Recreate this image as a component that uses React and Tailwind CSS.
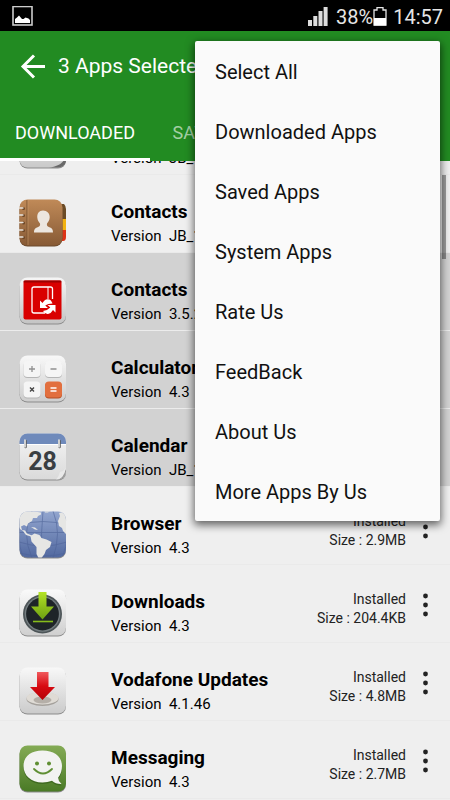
import clsx from 'clsx';

const TABS = ['DOWNLOADED', 'SAVED APPS', 'SYSTEM'];

const MENU_ITEMS = [
  'Select All',
  'Downloaded Apps',
  'Saved Apps',
  'System Apps',
  'Rate Us',
  'FeedBack',
  'About Us',
  'More Apps By Us',
];

const Tile = ({ id, from, to, children }) => (
  <svg width="48" height="48" viewBox="0 0 48 48" className="shrink-0" aria-hidden="true">
    <defs>
      <linearGradient id={id} x1="0" y1="0" x2="0" y2="1">
        <stop offset="0" stopColor={from} />
        <stop offset="1" stopColor={to} />
      </linearGradient>
      <clipPath id={`${id}-clip`}>
        <rect x="0.5" y="0.5" width="46.5" height="46" rx="8" />
      </clipPath>
    </defs>
    <rect x="0.5" y="1.5" width="46.5" height="46" rx="8" fill="#8b8b8b" />
    <rect x="0.5" y="0.5" width="46.5" height="46" rx="8" fill={`url(#${id})`} />
    {children}
  </svg>
);

const ClockIcon = () => (
  <Tile id="clock" from="#f7f7f7" to="#c9c9c9">
    <path d="M30 46.500c10-1 15-5 17-12v5c0 4-4 7-8 7z" fill="#3f3f3f" opacity="0.7" />
  </Tile>
);

const ContactsIcon = () => (
  <svg width="48" height="48" viewBox="0 0 48 48" className="shrink-0" aria-hidden="true">
    <defs>
      <linearGradient id="book" x1="0" y1="0" x2="0" y2="1">
        <stop offset="0" stopColor="#c08a58" />
        <stop offset="1" stopColor="#875a35" />
      </linearGradient>
    </defs>
    <path d="M40 5h5q2 2 2 5v10h-7z" fill="#6b4b26" />
    <path d="M40 20h7v11h-7z" fill="#f2b210" />
    <path d="M40 31h7v7q0 4-3 4h-4z" fill="#dd3316" />
    <rect x="0.5" y="1.5" width="43" height="46" rx="8" fill="#6d4a2c" />
    <rect x="0.5" y="0.5" width="43" height="46" rx="8" fill="url(#book)" />
    <path d="M8 1v45" stroke="#7c5431" strokeWidth="1" />
    <path d="M9 1v45" stroke="#cb9a6b" strokeWidth="0.6" />
    {[9, 16, 23.5, 31, 38].map(y => (
      <g key={y}>
        <circle cx="4.5" cy={y + 0.6} r="1.5" fill="#6a4526" />
        <path d={`M0.500 ${y}h3.500`} stroke="#e9e4dd" strokeWidth="1.300" strokeLinecap="round" />
      </g>
    ))}
    <path d="M24 11.500c-4 0-6 3-5.700 7 .2 3 1.500 4.500 2.700 6 .4 2-.3 3-2 3.600-2.600 1-4 2-4 5.400h19c0-3.400-1.400-4.400-4-5.400-1.700-.6-2.400-1.600-2-3.600 1.200-1.500 2.500-3 2.700-6 .3-4-2.700-7-6.700-7z" fill="#ece6df" />
  </svg>
);

const RedContactsIcon = () => (
  <Tile id="sync" from="#f6f6f6" to="#c4c4c4">
    <rect x="4.500" y="3.500" width="38" height="39" rx="2" fill="#d90000" />
    <rect x="4.500" y="3.500" width="38" height="2" rx="1" fill="#9c0000" />
    <g fill="none" stroke="#fff" strokeWidth="1.300">
      <path d="M33.500 22V12q0-2-2-2H15q-2 0-2 2v22q0 2 2 2h11" />
      <path d="M29 10v12" strokeWidth="1" />
    </g>
    <path d="M21 23.500v7.500h8l-2.800-2.500q2.800-2 7.300-2-1.500-4.500-5-4.300-3 .2-5 3.800z" fill="#fff" />
    <path d="M36.500 35.500v-7.500h-8l2.800 2.500q-2.800 3-7.300 3.500 2 3.300 5 3 3-.4 5-4z" fill="#fff" />
  </Tile>
);

const CalculatorIcon = () => (
  <Tile id="calc" from="#f8f8f8" to="#cdcdcd">
    {[[4.5, 6], [26, 6], [4.5, 26.5], [26, 26.5]].map(([x, y], i) => (
      <g key={i}>
        <rect x={x} y={y + 1} width="17" height="16" rx="4" fill={i === 3 ? '#b34e24' : '#b5b5b5'} />
        <rect x={x} y={y} width="17" height="16" rx="4" fill={i === 3 ? '#e26f3e' : '#f5f5f5'} />
      </g>
    ))}
    <g fill="none" strokeWidth="1.300">
      <path d="M10 14h6M13 11v6M31.500 14h6" stroke="#909090" />
      <path d="M11 32.500l4 4M15 32.500l-4 4" stroke="#444" strokeWidth="1.400" />
      <path d="M31.500 33h6M31.500 36h6" stroke="#fff" />
    </g>
  </Tile>
);

const CalendarIcon = () => (
  <Tile id="cal" from="#f4f4f4" to="#dadada">
    <g clipPath="url(#cal-clip)">
      <rect width="48" height="11" fill="#6f8abb" />
      <path d="M0 11.500h48" stroke="#fff" strokeWidth="1" />
      <path d="M47 36l-9 11h10z" fill="#999" />
      <path d="M47 35q-2 3-6 4-1 4-4 8 8-1 10-12z" fill="#e9e9e9" />
    </g>
    <path d="M6.500 8v6M40.500 8v6" stroke="#555" strokeWidth="2.500" strokeLinecap="round" />
    <path d="M6 7v7M40 7v7" stroke="#eee" strokeWidth="1.600" strokeLinecap="round" />
    <text x="23.500" y="37" textAnchor="middle" fontFamily="Roboto, sans-serif" fontWeight="700" fontSize="25" fill="#3a3e42">28</text>
  </Tile>
);

const BrowserIcon = () => (
  <Tile id="globe" from="#93a6cf" to="#5269a0">
    <g clipPath="url(#globe-clip)">
      <g fill="none" stroke="#4d6297" strokeWidth="0.8" opacity="0.7">
        <path d="M0 14q24-7 48 0M0 31q24 8 48 0M0 21.500h48M0 42q24 6 48 0" />
        <path d="M24 0q-3 23 0 47M13 0Q2 22 13 47M34 0q9 22 0 47M4 0q-8 24 0 47M43 0q10 24 0 47" />
      </g>
      <g fill="#e6e6e4">
        <path d="M0 0h12l10 1.500 0 2-3 1.500-1 2-4 0-1 3-4 2.500-1 3-3-1.500-3 1.500 1 3.500 3 .5 2 3 5 2-1 1-5-1.500-3-4-3-2-3-6z" />
        <path d="M12 16l4 .5 3 2.500-3-.500z" />
        <path d="M26 0h5l-2 1.500h-3z" />
        <path d="M11.500 25l4-2.500 5 1.500 2 3 5 1.500 5 2.500-1.500 5-4 3-1.500 4-3 4-3 0-2-4 0-7-5-5.500z" />
        <path d="M47 0v23l-3-3-1-3-3-2-1-5 2-5-1-3z" />
      </g>
    </g>
  </Tile>
);

const DownloadsIcon = () => (
  <Tile id="down" from="#fafafa" to="#cfcfcf">
    <circle cx="23.500" cy="25" r="19.500" fill="#4d5558" />
    <circle cx="23.500" cy="25" r="17.800" fill="#747d80" />
    <circle cx="23.500" cy="25" r="16.400" fill="#1e2428" />
    <defs>
      <linearGradient id="lime" x1="0" y1="0" x2="0" y2="1">
        <stop offset="0" stopColor="#b4e325" />
        <stop offset="1" stopColor="#6da012" />
      </linearGradient>
    </defs>
    <path d="M19.500 3h8v14.500h7.500L23.500 30.500 12 17.500h7.500z" fill="url(#lime)" />
    <path d="M14 32.500h20" stroke="#86bc1b" strokeWidth="1.600" />
  </Tile>
);

const VodafoneIcon = () => (
  <Tile id="voda" from="#f8f8f8" to="#cbcbcb">
    <ellipse cx="23.500" cy="32" rx="16" ry="7" fill="#a5a19c" />
    <ellipse cx="23.500" cy="31" rx="16" ry="6.500" fill="#dfdbd5" />
    <ellipse cx="23.500" cy="33" rx="9" ry="3.500" fill="#b5afa8" />
    <defs>
      <linearGradient id="red" x1="0" y1="0" x2="0" y2="1">
        <stop offset="0" stopColor="#f0595c" />
        <stop offset="0.500" stopColor="#d80b12" />
        <stop offset="1" stopColor="#b50006" />
      </linearGradient>
    </defs>
    <path d="M18 5h11.500v15H36L23.500 33 11 20h7z" fill="url(#red)" />
  </Tile>
);

const MessagingIcon = () => (
  <Tile id="msg" from="#84ab55" to="#4a7a26">
    <path d="M23.500 7C12 7 4.500 13 4.500 22.500S12 39 23.500 39q5 0 9.500-1.800 4 3.600 9.500 3.300-3.500-3-3.300-6.500 3.800-4.500 3.800-11.500C43 13 35 7 23.500 7z" fill="#3f6a20" />
    <path d="M23.500 5.500C12 5.500 4.500 11.500 4.500 21S12 37.500 23.500 37.500q5 0 9.500-1.800 4 3.600 9.500 3.300-3.500-3-3.300-6.500 3.800-4.500 3.800-11.500C43 11.500 35 5.500 23.500 5.500z" fill="#f2f3f1" />
    <circle cx="18" cy="18.500" r="2" fill="#5f8f33" />
    <circle cx="30" cy="18.500" r="2" fill="#5f8f33" />
    <path d="M15 24q9 9 18 0" fill="none" stroke="#5f8f33" strokeWidth="1.800" strokeLinecap="round" />
  </Tile>
);

const APPS = [
  { name: 'Contacts', version: 'JB_1.0', size: '1.9MB', icon: ContactsIcon },
  { name: 'Contacts', version: '3.5.2', size: '3.1MB', icon: RedContactsIcon, selected: true },
  { name: 'Calculator', version: '4.3', size: '1.2MB', icon: CalculatorIcon, selected: true },
  { name: 'Calendar', version: 'JB_1.0', size: '2.4MB', icon: CalendarIcon, selected: true },
  { name: 'Browser', version: '4.3', size: '2.9MB', icon: BrowserIcon },
  { name: 'Downloads', version: '4.3', size: '204.4KB', icon: DownloadsIcon },
  { name: 'Vodafone Updates', version: '4.1.46', size: '4.8MB', icon: VodafoneIcon },
  { name: 'Messaging', version: '4.3', size: '2.7MB', icon: MessagingIcon },
];

const AppRow = ({ app }) => {
  const Icon = app.icon;
  return (
    <li className={clsx('flex h-[78px] shrink-0 items-start border-b pt-6 pl-[19px] pr-3', app.selected ? 'border-[#ececec] bg-[#d2d2d2]' : 'border-[#eaeaea]')}>
      <Icon />
      <div className="ml-11 min-w-0 flex-1">
        <p className="truncate text-[19px] leading-[26px] font-bold">{app.name}</p>
        <p className="text-[15px] leading-[22px] whitespace-pre">Version  {app.version}</p>
      </div>
      <div className="pt-px text-right text-sm leading-[19px] text-[#222]">
        <p>Installed</p>
        <p>Size : {app.size}</p>
      </div>
      <button type="button" aria-label={`Options for ${app.name}`} className="ml-2 flex h-8 w-6 justify-center">
        <svg width="6" height="32" viewBox="0 0 6 32" fill="#222">
          <circle cx="2.500" cy="7" r="2.400" />
          <circle cx="2.500" cy="16" r="2.400" />
          <circle cx="2.500" cy="25" r="2.400" />
        </svg>
      </button>
    </li>
  );
};

const StatusBar = () => (
  <div className="flex h-[31px] shrink-0 items-center bg-black pt-0.5 pr-[7px] pl-3 text-xl text-[#e6e6e6]">
    <svg width="21" height="21" viewBox="0 0 21 21" aria-hidden="true">
      <rect x="1" y="0.500" width="19" height="18.500" fill="none" stroke="#ccc" strokeWidth="1.600" />
      <path d="M3 17v-4l2-1.500L7 9.500 10 13l1.500 0 2-1.500 3 1 1.500 1.500v3z" fill="#fff" />
    </svg>
    <svg width="20" height="20" viewBox="0 0 20 20" className="ml-auto" fill="#ddd" aria-hidden="true">
      <path d="M0 13h4v6H0zM5.300 9h4v10h-4zM10.500 4h4v15h-4zM15.600 0h4v19h-4z" />
    </svg>
    <span className="ml-2">38%</span>
    <svg width="14" height="20" viewBox="0 0 14 20" aria-hidden="true">
      <path d="M1 3h3V0.700h6v2.300h3v15H1z" fill="none" stroke="#e6e6e6" strokeWidth="1.300" />
      <path d="M1 11h12v7.500H1z" fill="#fff" />
    </svg>
    <span className="ml-[6px]">14:57</span>
  </div>
);

export default function App() {
  return (
    <div className="relative flex h-screen flex-col overflow-hidden bg-[#efefef] font-[Roboto,sans-serif] text-black">
      <StatusBar />

      <header className="shrink-0 bg-[#228b22] text-white">
        <div className="flex h-[72px] items-center pl-5">
          <button type="button" aria-label="Back">
            <svg width="26" height="26" viewBox="0 0 26 26" fill="none" stroke="#fff" strokeWidth="3" aria-hidden="true">
              <path d="M25 12.500H3M14 1.500L3 12.500l11 11" />
            </svg>
          </button>
          <h1 className="ml-3 text-[21px]">3 Apps Selected</h1>
        </div>
        <nav className="grid grid-cols-3">
          {TABS.map((tab, i) => (
            <button key={tab} type="button"
              className={clsx('h-[58px] border-b-[3px] pt-1 text-lg whitespace-nowrap', i === 0 ? 'border-white' : 'border-transparent text-white/60')}>
              {tab}
            </button>
          ))}
        </nav>
      </header>

      <main className="relative flex min-h-0 flex-1 flex-col">
        {/* tail of the row that is scrolled under the tabs */}
        <ul className="flex h-[14px] shrink-0 flex-col justify-end overflow-hidden">
          <AppRow app={{ name: 'Clock', version: 'JB_1.0', size: '1.4MB', icon: ClockIcon }} />
        </ul>
        <ul className="flex flex-col">
          {APPS.map((app, i) => <AppRow key={i} app={app} />)}
        </ul>
        <div className="absolute top-[14px] right-1 h-[84px] w-1 bg-black/35" />
      </main>

      <div role="menu" className="absolute top-[41px] right-[10px] flex w-[245px] flex-col rounded-[2px] bg-[#fafafa] shadow-[0_3px_9px_1px_rgba(0,0,0,0.6)]">
        {MENU_ITEMS.map(item => (
          <button key={item} type="button" role="menuitem" className="h-[60px] px-5 pt-0.5 text-left text-xl text-[#111]">
            {item}
          </button>
        ))}
      </div>
    </div>
  );
}
